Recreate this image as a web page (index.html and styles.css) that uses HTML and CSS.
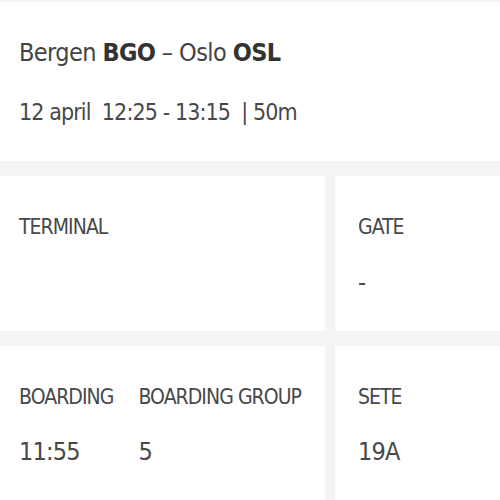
FILE: index.html
```html
<!DOCTYPE html>
<html>
<head>
<meta charset="utf-8">
<link rel="stylesheet" href="styles.css">
</head>
<body>
<div class="page">
  <header class="trip">
    <div class="route">Bergen <b>BGO</b> – Oslo <b>OSL</b></div>
    <div class="times">12 april&nbsp; 12:25 - 13:15 &nbsp;| 50m</div>
  </header>
  <section class="grid">
    <div class="card">
      <div class="field">
        <div class="label">TERMINAL</div>
        <div class="value"></div>
      </div>
    </div>
    <div class="card card-right">
      <div class="field">
        <div class="label">GATE</div>
        <div class="value dash">-</div>
      </div>
    </div>
    <div class="card">
      <div class="fields">
        <div class="field">
          <div class="label">BOARDING</div>
          <div class="value">11:55</div>
        </div>
        <div class="field">
          <div class="label">BOARDING GROUP</div>
          <div class="value">5</div>
        </div>
      </div>
    </div>
    <div class="card card-right">
      <div class="field">
        <div class="label">SETE</div>
        <div class="value">19A</div>
      </div>
    </div>
  </section>
</div>
</body>
</html>
```

FILE: styles.css
```css
html, body {
  margin: 0;
  padding: 0;
  background: #f4f4f4;
}
body {
  font-family: "DejaVu Sans Condensed", "DejaVu Sans", sans-serif;
  color: #3a3a3a;
  width: 500px;
  height: 500px;
  overflow: hidden;
}
.page {
  padding-top: 2px;
}
.trip {
  background: #fff;
  height: 159px;
  box-sizing: border-box;
  padding: 35px 0 0 19px;
}
.route {
  font-size: 25px;
  line-height: 32px;
  letter-spacing: -0.6px;
  color: #444;
}
.route b {
  font-weight: bold;
  color: #333;
}
.times {
  margin-top: 28px;
  font-size: 23px;
  line-height: 30px;
  letter-spacing: -0.9px;
  color: #484848;
}
.grid {
  margin-top: 15px;
  display: grid;
  grid-template-columns: 325px 165px;
  grid-template-rows: 155px 160px;
  column-gap: 10px;
  row-gap: 15px;
}
.card {
  background: #fff;
  padding: 38px 0 0 19px;
  box-sizing: border-box;
}
.card-right {
  padding-left: 23px;
}
.fields {
  display: flex;
  gap: 25px;
}
.label {
  font-size: 21px;
  line-height: 26px;
  letter-spacing: -0.95px;
  color: #484848;
}
.value {
  margin-top: 28px;
  font-size: 25px;
  line-height: 28px;
  letter-spacing: -0.8px;
  color: #484848;
}
.dash {
  margin-top: 29px;
}
```
